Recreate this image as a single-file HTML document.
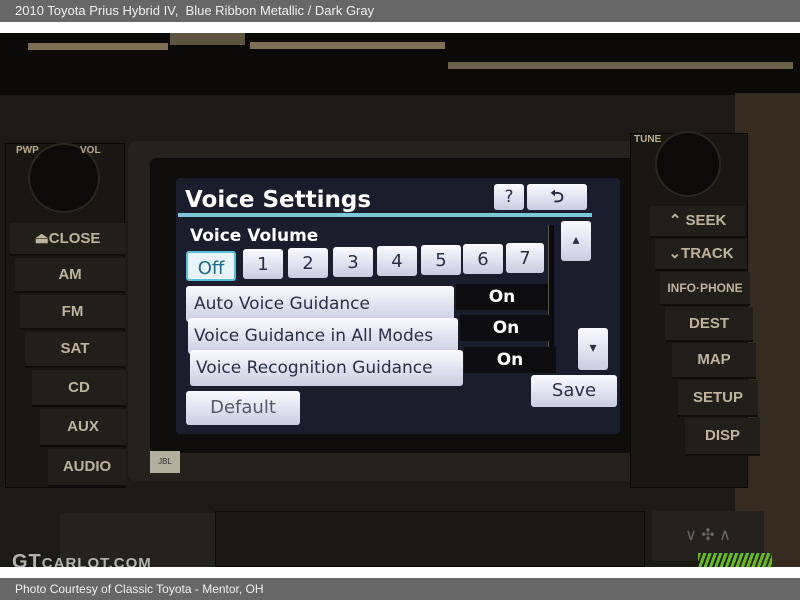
<!DOCTYPE html>
<html><head><meta charset="utf-8"><style>
*{margin:0;padding:0;box-sizing:border-box}
body{width:800px;height:600px;overflow:hidden;background:#fff;font-family:"Liberation Sans",sans-serif;position:relative}
.a{position:absolute}
.bar{left:0;width:800px;height:22px;background:#676767;color:#f0f0f0;font-size:13px;line-height:22px;padding-left:15px}
.photo{left:0;top:33px;width:800px;height:534px;background:#1b1713;overflow:hidden}
.btn{position:absolute;color:#bdb39e;font-weight:bold;font-size:15px;text-align:center;background:#221e19;border-bottom:2px solid #0f0c0a}
.sb{position:absolute;background:linear-gradient(#fafbff,#c9cde0);color:#2a2f45;border-radius:3px;font-size:17px;font-family:"DejaVu Sans",sans-serif}
.on{position:absolute;background:#0d0d10;color:#fff;font-size:17px;font-weight:bold;text-align:center;font-family:"DejaVu Sans",sans-serif}
.num{position:absolute;top:245px;width:40px;height:30px;background:linear-gradient(#fafbff,#c9cde0);border-radius:3px;color:#2a2f45;font-size:18px;text-align:center;line-height:32px;font-family:"DejaVu Sans",sans-serif}
</style></head><body>
<div class="a bar" style="top:0">2010 Toyota Prius Hybrid IV,&nbsp; Blue Ribbon Metallic / Dark Gray</div>
<div class="a photo">
 <div class="a" style="left:0;top:0;width:800px;height:62px;background:#0c0a08"></div>
 <div class="a" style="left:28px;top:10px;width:140px;height:7px;background:#7d6f54"></div>
 <div class="a" style="left:250px;top:9px;width:195px;height:7px;background:#7d6f54"></div>
 <div class="a" style="left:170px;top:0;width:75px;height:12px;background:#5e5340"></div>
 <div class="a" style="left:448px;top:29px;width:345px;height:7px;background:#6e6149"></div>
 <div class="a" style="left:0;top:62px;width:800px;height:472px;background:#1d1915"></div>
 <div class="a" style="left:735px;top:60px;width:65px;height:474px;background:#352b20"></div>
 <div class="a" style="left:5px;top:110px;width:120px;height:345px;background:#1a1713;border:1px solid #0a0806"></div>
 <div class="a" style="left:128px;top:108px;width:530px;height:340px;background:#25211c;border-radius:8px"></div>
 <div class="a" style="left:150px;top:125px;width:490px;height:295px;background:#0e0d0c;border-radius:6px"></div>
 <div class="a" style="left:630px;top:100px;width:118px;height:355px;background:#1a1713;border:1px solid #0a0806"></div>
 <div class="a" style="left:30px;top:112px;width:68px;height:66px;border-radius:50%;background:#0d0b09;box-shadow:0 0 0 2px #2a2620"></div>
 <div class="a" style="left:657px;top:100px;width:62px;height:62px;border-radius:50%;background:#0d0b09;box-shadow:0 0 0 2px #2a2620"></div>
 <div class="a" style="left:16px;top:112px;color:#b8ab90;font-size:10px;font-weight:bold">PWP</div>
 <div class="a" style="left:80px;top:112px;color:#b8ab90;font-size:10px;font-weight:bold">VOL</div>
 <div class="a" style="left:634px;top:101px;color:#b8ab90;font-size:10px;font-weight:bold">TUNE</div>
 <div class="btn" style="left:10px;top:190px;width:115px;height:33px;line-height:31px">⏏CLOSE</div>
 <div class="btn" style="left:15px;top:225px;width:110px;height:35px;line-height:33px">AM</div>
 <div class="btn" style="left:20px;top:262px;width:105px;height:35px;line-height:33px">FM</div>
 <div class="btn" style="left:25px;top:299px;width:100px;height:36px;line-height:34px">SAT</div>
 <div class="btn" style="left:32px;top:337px;width:94px;height:37px;line-height:35px">CD</div>
 <div class="btn" style="left:40px;top:376px;width:86px;height:38px;line-height:36px">AUX</div>
 <div class="btn" style="left:48px;top:416px;width:78px;height:38px;line-height:36px">AUDIO</div>
 <div class="a" style="left:150px;top:418px;width:30px;height:22px;background:#b4ae9e;font-size:8px;color:#333;text-align:center;line-height:22px">JBL</div>
 <div class="btn" style="left:650px;top:173px;width:95px;height:32px;line-height:30px">⌃ SEEK</div>
 <div class="btn" style="left:655px;top:206px;width:92px;height:32px;line-height:30px">⌄TRACK</div>
 <div class="btn" style="left:660px;top:239px;width:90px;height:34px;line-height:32px;font-size:12px">INFO·PHONE</div>
 <div class="btn" style="left:665px;top:274px;width:88px;height:35px;line-height:33px">DEST</div>
 <div class="btn" style="left:672px;top:310px;width:84px;height:36px;line-height:33px">MAP</div>
 <div class="btn" style="left:678px;top:347px;width:80px;height:37px;line-height:35px">SETUP</div>
 <div class="btn" style="left:685px;top:385px;width:75px;height:38px;line-height:36px">DISP</div>
 <div class="a" style="left:60px;top:480px;width:160px;height:54px;background:#25211c"></div>
 <div class="a" style="left:215px;top:478px;width:430px;height:56px;background:#1b1815;border:1px solid #0c0a08"></div>
 <div class="a" style="left:652px;top:478px;width:112px;height:50px;background:#25211c;color:#666;font-size:16px;line-height:50px;text-align:center">∨ ✣ ∧</div>
 <div class="a" style="left:12px;top:518px;color:#d8d8d8;font-size:20px;font-weight:bold;opacity:.8;letter-spacing:1px">GT<span style="font-size:15px">CARLOT.COM</span></div>
 <div class="a" style="left:698px;top:520px;width:74px;height:14px;background:repeating-linear-gradient(110deg,#6b2 0 3px,transparent 3px 5px)"></div>
</div>
<div class="a" style="left:176px;top:178px;width:444px;height:256px;background:#1a1e2c;border-radius:4px"></div>
<div class="a" style="left:185px;top:187px;color:#fff;font-weight:bold;font-size:23px;font-family:'DejaVu Sans',sans-serif">Voice Settings</div>
<div class="sb" style="left:494px;top:184px;width:30px;height:26px;text-align:center;line-height:26px">?</div>
<div class="sb" style="left:527px;top:184px;width:60px;height:26px;text-align:center;line-height:26px;font-weight:bold">⮌</div>
<div class="a" style="left:178px;top:213px;width:414px;height:4px;background:#7cc8d8"></div>
<div class="a" style="left:190px;top:226px;color:#fff;font-weight:bold;font-size:17px;font-family:'DejaVu Sans',sans-serif">Voice Volume</div>
<div class="num" style="left:186px;top:251px;width:50px;border:2px solid #58c0d8;background:#e8f4fa;color:#1a6a88">Off</div>
<div class="num" style="left:243px;top:249px">1</div>
<div class="num" style="left:288px;top:248px">2</div>
<div class="num" style="left:333px;top:247px">3</div>
<div class="num" style="left:377px;top:246px">4</div>
<div class="num" style="left:421px;top:245px">5</div>
<div class="num" style="left:463px;top:244px">6</div>
<div class="num" style="left:506px;top:243px;width:38px">7</div>
<div class="a" style="left:548px;top:225px;width:6px;height:145px;background:#0b0c10;border-left:1px solid #554"></div>
<div class="sb" style="left:561px;top:221px;width:30px;height:40px;text-align:center;line-height:38px;font-size:14px">▴</div>
<div class="sb" style="left:578px;top:328px;width:30px;height:42px;text-align:center;line-height:40px;font-size:14px">▾</div>
<div class="sb" style="left:186px;top:286px;width:268px;height:36px;padding:8px 8px;font-size:17px">Auto Voice Guidance</div>
<div class="on" style="left:456px;top:284px;width:92px;height:26px;line-height:26px">On</div>
<div class="sb" style="left:188px;top:318px;width:270px;height:36px;padding:8px 6px;font-size:17px">Voice Guidance in All Modes</div>
<div class="on" style="left:460px;top:315px;width:92px;height:26px;line-height:26px">On</div>
<div class="sb" style="left:190px;top:350px;width:273px;height:36px;padding:8px 6px;font-size:17px">Voice Recognition Guidance</div>
<div class="on" style="left:464px;top:347px;width:92px;height:26px;line-height:26px">On</div>
<div class="sb" style="left:531px;top:375px;width:86px;height:32px;text-align:center;line-height:32px;font-size:18px">Save</div>
<div class="sb" style="left:186px;top:391px;width:114px;height:34px;text-align:center;line-height:34px;font-size:18px;color:#555a6a">Default</div>
<div class="a" style="left:0;top:567px;width:800px;height:11px;background:#fff"></div>
<div class="a bar" style="top:578px;font-size:12px">Photo Courtesy of Classic Toyota - Mentor, OH</div>
</body></html>
